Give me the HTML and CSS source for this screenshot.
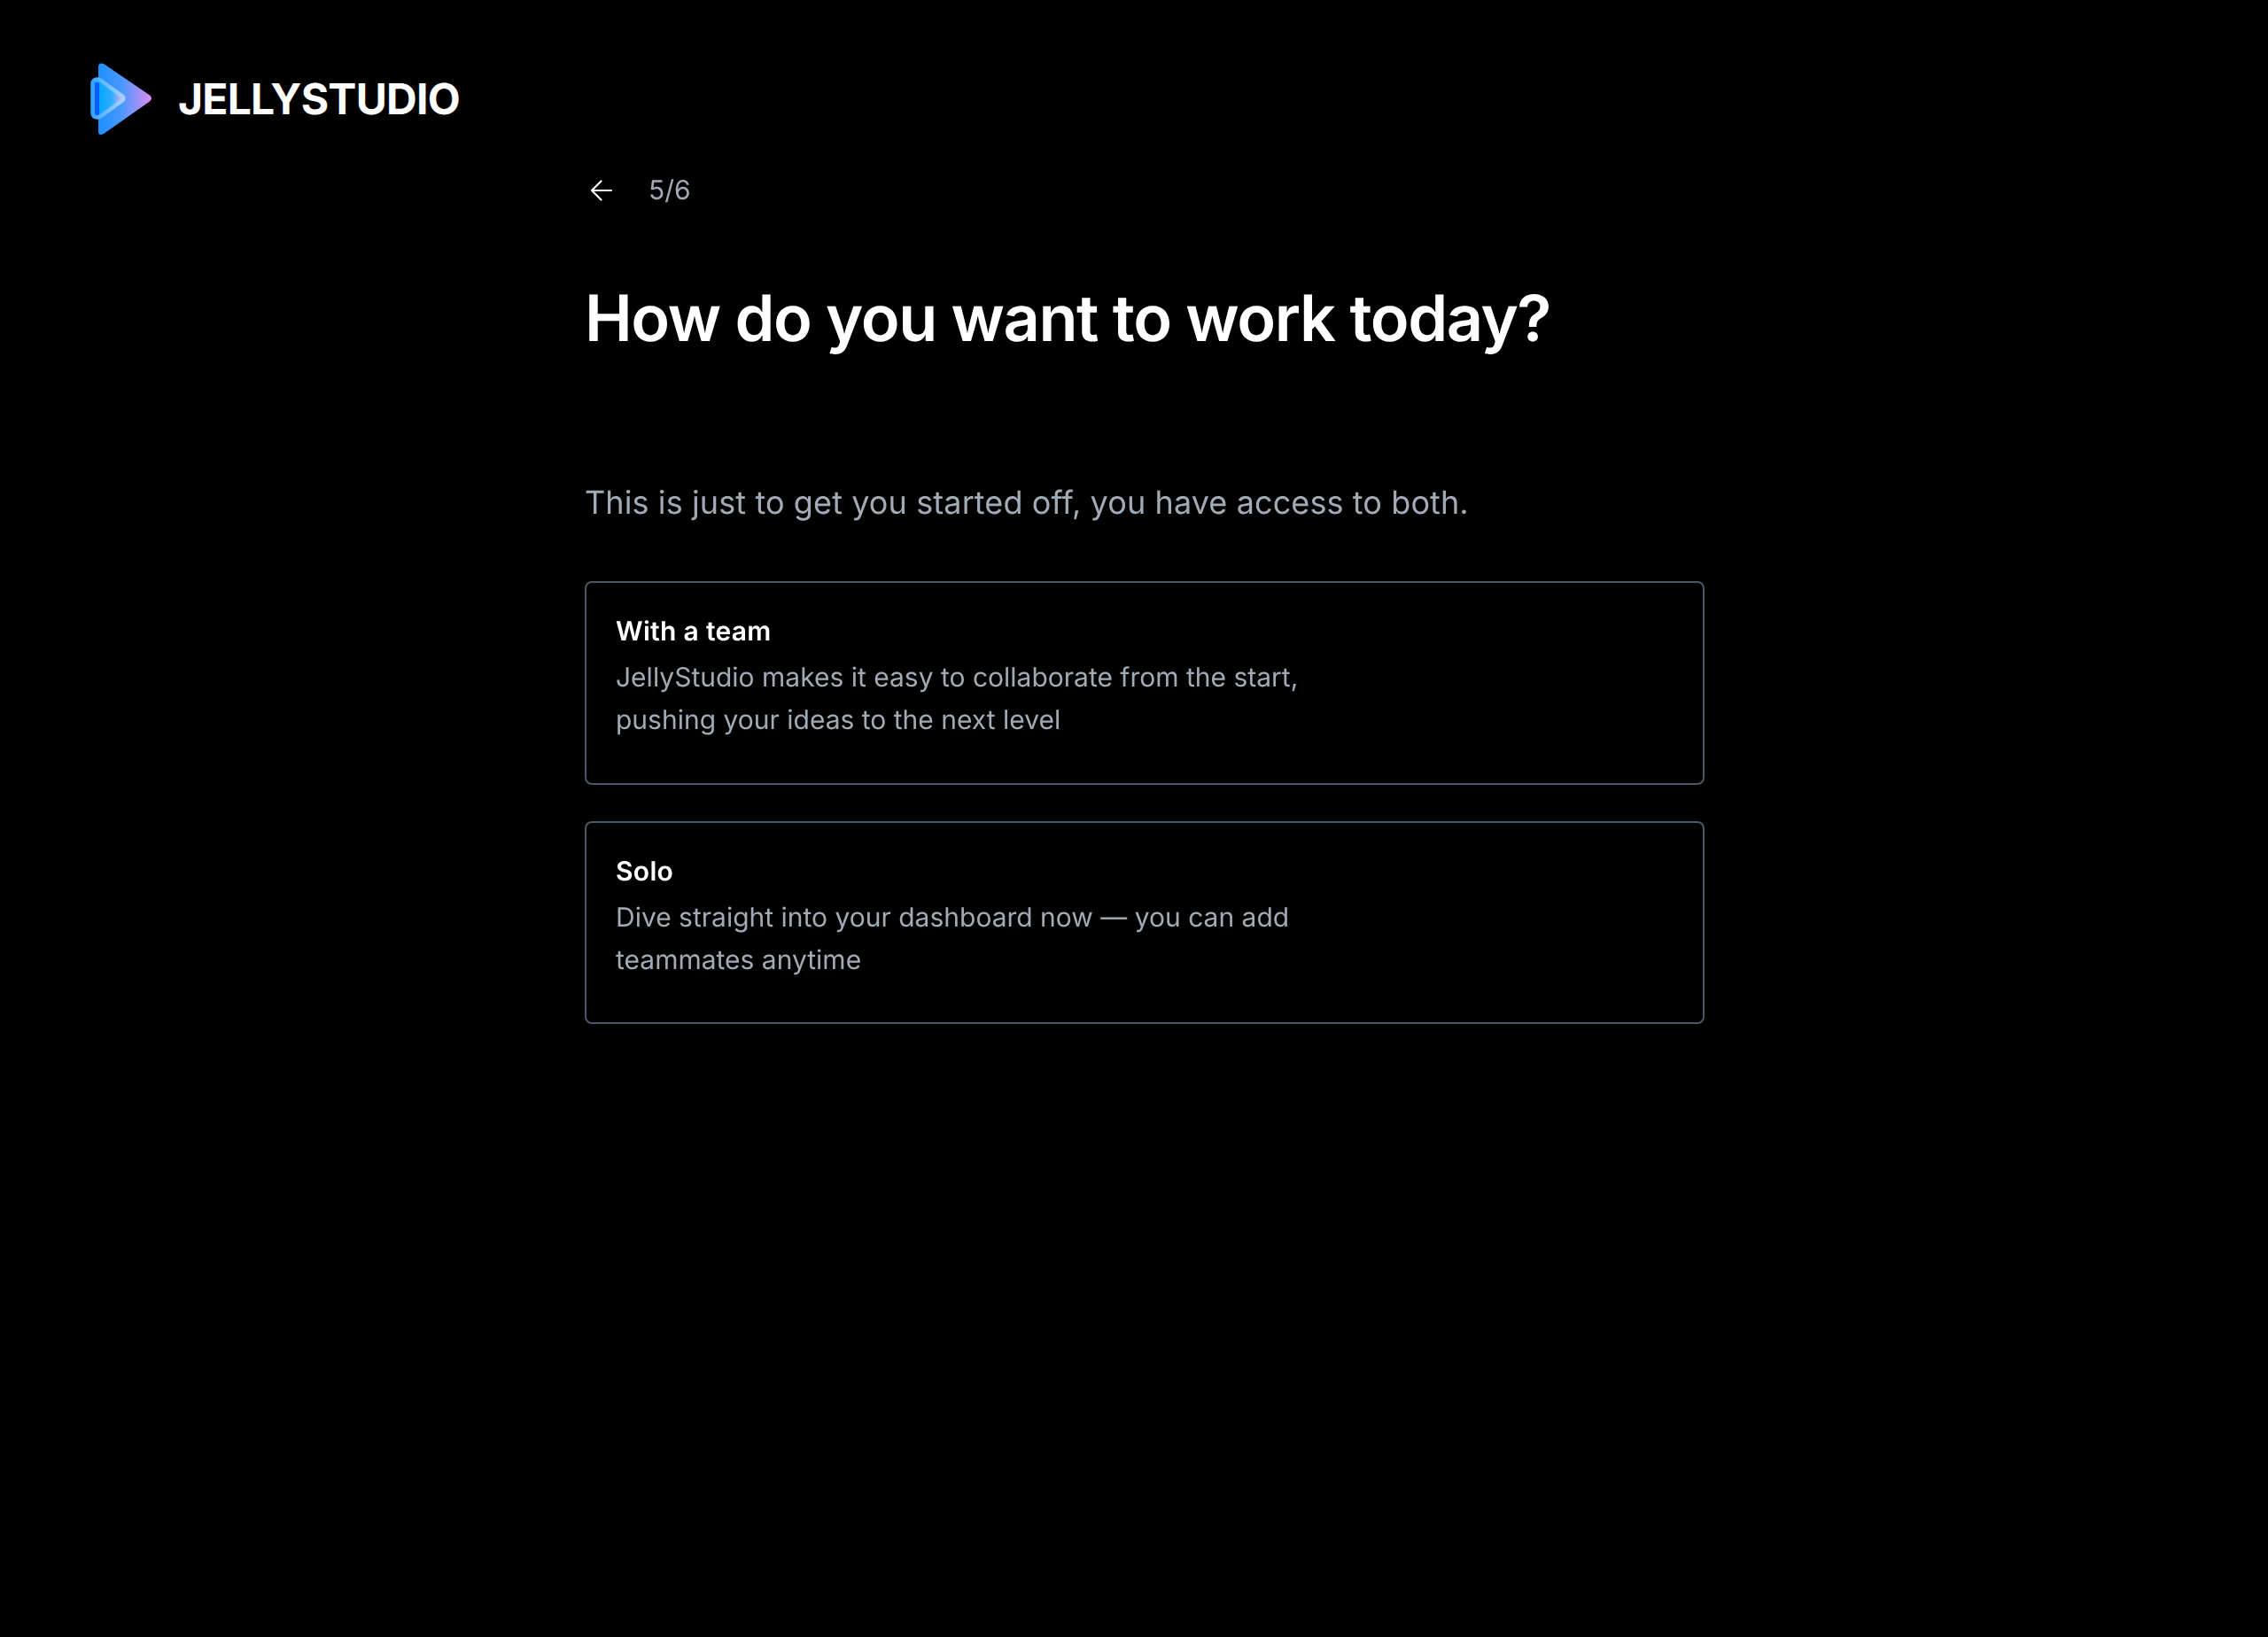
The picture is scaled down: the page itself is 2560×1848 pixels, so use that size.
FILE: index.html
```html
<!DOCTYPE html>
<html lang="en">
<head>
<meta charset="utf-8">
<title>JellyStudio</title>
<link rel="stylesheet" href="styles.css">
</head>
<body>
<header class="brand">
  <svg class="logo" width="70" height="82" viewBox="0 0 70 82" fill="none">
    <defs>
      <linearGradient id="g1" x1="10" y1="0" x2="70" y2="0" gradientUnits="userSpaceOnUse">
        <stop offset="0" stop-color="#1e90ff"/><stop offset="0.45" stop-color="#4a98ff"/><stop offset="1" stop-color="#de8cf0"/>
      </linearGradient>
      <linearGradient id="g2" x1="10" y1="0" x2="38" y2="0" gradientUnits="userSpaceOnUse">
        <stop offset="0" stop-color="#00a8ff"/><stop offset="0.55" stop-color="#30aeff"/><stop offset="1" stop-color="#e8b0ee"/>
      </linearGradient>
      <linearGradient id="g3" x1="1" y1="0" x2="41" y2="0" gradientUnits="userSpaceOnUse">
        <stop offset="0" stop-color="#2f9cff"/><stop offset="0.3" stop-color="#5fb6ff"/><stop offset="1" stop-color="#aed4ff"/>
      </linearGradient>
    </defs>
    <path d="M10 5 Q10 -1 16 1 L68 36.500 Q72 40 68 43.500 L16 80 Q10 83 10 77 Z" fill="url(#g1)"/>
    <path d="M3.500 24 Q3.500 18.500 9 18.500 Q11 18.500 13 20 L37 37.500 Q39.500 40 37 42.500 L13 60 Q11 61.500 9 61.500 Q3.500 61.500 3.500 56 Z" fill="url(#g2)" stroke="url(#g3)" stroke-width="4.500" stroke-linejoin="round"/>
    <rect x="6" y="22" width="5" height="37" rx="2" fill="#0a5cff"/>
  </svg>
  <span class="wordmark">JELLYSTUDIO</span>
</header>
<main class="flow">
  <div class="step">
    <svg class="back" width="26" height="26" viewBox="0 0 26 26" fill="none" stroke="#fff" stroke-width="2.200" stroke-linecap="round" stroke-linejoin="round">
      <path d="M24 13H2M12.500 2.500 2 13l10.500 10.500"/>
    </svg>
    <span class="count">5/6</span>
  </div>
  <h1 class="title">How do you want to work today?</h1>
  <p class="sub">This is just to get you started off, you have access to both.</p>
  <section class="card">
    <h2 class="card-title">With a team</h2>
    <p class="card-text">JellyStudio makes it easy to collaborate from the start,<br>pushing your ideas to the next level</p>
  </section>
  <section class="card">
    <h2 class="card-title">Solo</h2>
    <p class="card-text">Dive straight into your dashboard now — you can add<br>teammates anytime</p>
  </section>
</main>
</body>
</html>
```
FILE: styles.css
```css
* { box-sizing: border-box; }
html, body { margin: 0; background: #000; }
body { min-height: 1848px; font-family: Inter, "Liberation Sans", sans-serif; color: #fff; text-rendering: geometricPrecision; }
.brand { display: flex; align-items: center; gap: 30px; padding: 71px 0 0 101px; height: 153px; }
.wordmark { font-size: 48px; font-weight: 700; letter-spacing: -0.75px; line-height: 82px; }
.flow { width: 1264px; margin-left: 660px; will-change: transform; }
.step { display: flex; align-items: center; gap: 40px; margin-top: 49px; height: 26px; padding-left: 6px; }
.count { font-size: 30px; color: #a0abb6; line-height: 26px; }
.title { margin: 89px 0 0; font-size: 72px; font-weight: 600; line-height: 86px; letter-spacing: -1.4px; }
.sub { margin: 140px 0 0; font-size: 36px; font-weight: 400; color: #a0abb6; line-height: 48px; letter-spacing: 0.1px; }
.card { border: 2px solid #4a5867; border-radius: 8px; height: 230px; margin-top: 41px; padding: 33px 33px; }
.card:last-child { height: 229px; }
.sub + .card { margin-top: 65px; }
.card-title { margin: 0; font-size: 30px; font-weight: 600; line-height: 44px; letter-spacing: 0.3px; }
.card-text { margin: 6px 0 0; font-size: 30px; font-weight: 400; color: #a0abb6; line-height: 48px; }
```
